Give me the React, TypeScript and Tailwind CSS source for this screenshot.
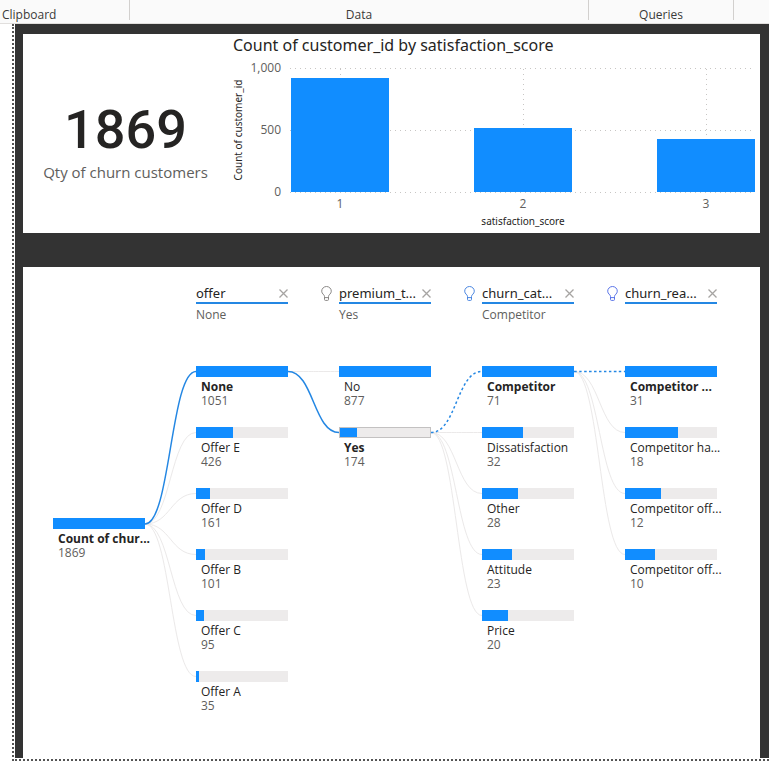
import React from "react";

type TreeNode = { name: string; value: number; bold?: boolean; framed?: boolean };
type Level = { title: string; selection: string; bulb?: string; nodes: TreeNode[] };

const LEVELS: Level[] = [
  {
    title: "offer",
    selection: "None",
    nodes: [
      { name: "None", value: 1051, bold: true },
      { name: "Offer E", value: 426 },
      { name: "Offer D", value: 161 },
      { name: "Offer B", value: 101 },
      { name: "Offer C", value: 95 },
      { name: "Offer A", value: 35 },
    ],
  },
  {
    title: "premium_t...",
    selection: "Yes",
    bulb: "#8a8886",
    nodes: [
      { name: "No", value: 877 },
      { name: "Yes", value: 174, bold: true, framed: true },
    ],
  },
  {
    title: "churn_cat...",
    selection: "Competitor",
    bulb: "#4a86e0",
    nodes: [
      { name: "Competitor", value: 71, bold: true },
      { name: "Dissatisfaction", value: 32 },
      { name: "Other", value: 28 },
      { name: "Attitude", value: 23 },
      { name: "Price", value: 20 },
    ],
  },
  {
    title: "churn_rea...",
    selection: "",
    bulb: "#5a74e8",
    nodes: [
      { name: "Competitor ...", value: 31, bold: true },
      { name: "Competitor ha...", value: 18 },
      { name: "Competitor off...", value: 12 },
      { name: "Competitor off...", value: 10 },
    ],
  },
];

const BARS = [
  { label: "1", x: 63, top: 44 },
  { label: "2", x: 246, top: 94 },
  { label: "3", x: 429, top: 105 },
];

const TICKS = [
  { label: "1,000", y: 34 },
  { label: "500", y: 96 },
  { label: "0", y: 158 },
];

// Node geometry shared by the connector curves
const COLUMN_PITCH = 143;
const COLUMN_WIDTH = 92;
const ROW_PITCH = 61;
const ROOT_Y = 158;

function link(column: number, fromY: number, toY: number) {
  const x0 = column * COLUMN_PITCH + COLUMN_WIDTH;
  const x1 = (column + 1) * COLUMN_PITCH;
  const mid = (x0 + x1) / 2;
  return `M${x0} ${fromY}C${mid} ${fromY} ${mid} ${toY} ${x1} ${toY}`;
}

const rowY = (row: number) => 5.5 + row * ROW_PITCH;

function Connectors() {
  return (
    <svg
      className="pointer-events-none absolute left-0 top-0 overflow-visible"
      width="664"
      height="360"
      fill="none"
      aria-hidden="true"
    >
      <g stroke="#ebe9e9">
        {[1, 2, 3, 4, 5].map((r) => (
          <path key={r} d={link(0, ROOT_Y, rowY(r))} />
        ))}
        <path d={link(1, rowY(0), rowY(0))} />
        {[1, 2, 3, 4].map((r) => (
          <path key={r} d={link(2, rowY(1), rowY(r))} />
        ))}
        {[1, 2, 3].map((r) => (
          <path key={r} d={link(3, rowY(0), rowY(r))} />
        ))}
      </g>
      <g stroke="#2487e3" strokeWidth="1.5">
        <path d={link(0, ROOT_Y, rowY(0))} />
        <path d={link(1, rowY(0), rowY(1))} />
        <path d={link(2, rowY(1), rowY(0))} strokeDasharray="2.5 2.5" />
        <path d={link(3, rowY(0), rowY(0))} strokeDasharray="2.5 2.5" />
      </g>
    </svg>
  );
}

function NodeBox({ node, max }: { node: TreeNode; max: number }) {
  return (
    <li className="h-[61px] whitespace-nowrap text-[12px] leading-[14px]">
      <div
        className={
          node.framed
            ? "h-[11px] bg-[#edebeb] outline outline-1 -outline-offset-1 outline-[#c3c1c1]"
            : "h-[11px] bg-[#edebeb]"
        }
      >
        <div className="h-full bg-[#118dff]" style={{ width: `${(node.value / max) * 100}%` }} />
      </div>
      <div className={node.bold ? "mt-[3px] pl-[5px] font-bold text-[#252423]" : "mt-[3px] pl-[5px] text-[#252423]"}>
        {node.name}
      </div>
      <div className="pl-[5px] text-[#605e5c]">{node.value}</div>
    </li>
  );
}

function Bulb({ color }: { color: string }) {
  return (
    <svg
      className="absolute -left-[18px] top-[2px]"
      width="11"
      height="15"
      viewBox="0 0 11 15"
      fill="none"
      stroke={color}
      aria-hidden="true"
    >
      <path d="M3.5 10.5C3.5 8.5 0.7 8 0.7 5.2A4.8 4.7 0 0 1 10.3 5.2C10.3 8 7.5 8.5 7.5 10.5V13.5Q7.5 14.4 6.6 14.4H4.4Q3.5 14.4 3.5 13.5ZM3.5 11.6H7.5" />
    </svg>
  );
}

function LevelHeader({ level }: { level: Level }) {
  return (
    <div className="relative h-[82px] w-[92px] whitespace-nowrap">
      {level.bulb && <Bulb color={level.bulb} />}
      <div className="flex h-5 items-center justify-between border-b-2 border-[#2487e3]">
        <h2 className="font-['Noto_Sans',sans-serif] text-[13px] leading-[18px] text-[#252423]">{level.title}</h2>
        <button type="button" aria-label={`Remove ${level.title}`} className="mt-px shrink-0">
          <svg width="9" height="9" viewBox="0 0 9 9" stroke="#a6a4a2" strokeWidth="1.3" aria-hidden="true">
            <path d="M0.5 0.5L8.5 8.5M8.5 0.5L0.5 8.5" />
          </svg>
        </button>
      </div>
      <p className="mt-1 text-[12px] leading-[14px] text-[#605e5c]">{level.selection}</p>
    </div>
  );
}

function ColumnChart() {
  return (
    <svg
      viewBox="0 0 532 199"
      className="min-w-0 flex-1 font-['Open_Sans','Noto_Sans',sans-serif]"
      role="img"
      aria-label="Count of customer_id by satisfaction_score"
    >
      <text x="5" y="17" fontSize="16" fill="#252423" className="font-['Noto_Sans',sans-serif]">
        Count of customer_id by satisfaction_score
      </text>
      <g stroke="#c8c6c4" strokeDasharray="1 4">
        {TICKS.map((t) => (
          <path key={t.label} d={`M62 ${t.y + 0.5}H525`} />
        ))}
        {BARS.map((b) => (
          <path key={b.label} d={`M${b.x + 49.5} 35V159`} />
        ))}
      </g>
      {BARS.map((b) => (
        <rect key={b.label} x={b.x} y={b.top} width="98" height={158 - b.top} fill="#118dff" />
      ))}
      <g fontSize="12" fill="#605e5c">
        {TICKS.map((t) => (
          <text key={t.label} x="53" y={t.y + 4} textAnchor="end">
            {t.label}
          </text>
        ))}
        {BARS.map((b) => (
          <text key={b.label} x={b.x + 49} y="174" textAnchor="middle">
            {b.label}
          </text>
        ))}
      </g>
      <g fontSize="10" fill="#252423" textAnchor="middle" className="font-['Noto_Sans',sans-serif]">
        <text x="295" y="191">
          satisfaction_score
        </text>
        <text transform="translate(14 96) rotate(-90)">Count of customer_id</text>
      </g>
    </svg>
  );
}

export default function App() {
  return (
    <div className="min-h-[765px] overflow-x-hidden bg-white font-['Open_Sans','Noto_Sans',sans-serif]">
      <header className="flex h-6 border-b border-[#e1dfdd] bg-[#fafafa] text-center text-[12px] leading-[30px] text-[#3b3a39]">
        <div className="mb-[3px] w-[130px] shrink-0 border-r border-[#d2d0ce] pl-[2px] text-left">Clipboard</div>
        <div className="mb-[3px] flex-1 border-r border-[#d2d0ce]">Data</div>
        <div className="mb-[3px] w-[145px] shrink-0 border-r border-[#d2d0ce]">Queries</div>
        <div className="w-[35px] shrink-0" />
      </header>

      <main className="ml-3 border-b-2 border-l-2 border-dotted border-[#555] pb-px pl-px">
        <div className="flex flex-col gap-[34px] bg-[#333] pl-2 pr-[9px] pt-[10px]">
          <section className="flex items-start bg-white">
            <div className="flex w-[205px] shrink-0 flex-col items-center self-center pt-4 text-center">
              <div className="font-['Roboto',sans-serif] text-[54px] font-medium leading-[60px] text-[#252423]">1869</div>
              <div className="text-[15px] leading-[24px] text-[#605e5c]">Qty of churn customers</div>
            </div>
            <ColumnChart />
          </section>

          <section className="h-[491px] bg-white pl-[30px] pt-[17px]">
            <div className="flex gap-[51px] pl-[143px]">
              {LEVELS.map((level) => (
                <LevelHeader key={level.title} level={level} />
              ))}
            </div>
            <div className="relative flex gap-[51px]">
              <Connectors />
              <ul className="w-[92px] shrink-0 pt-[152px]">
                <NodeBox node={{ name: "Count of chur...", value: 1869, bold: true }} max={1869} />
              </ul>
              {LEVELS.map((level) => (
                <ul key={level.title} className="w-[92px] shrink-0">
                  {level.nodes.map((node, i) => (
                    <NodeBox key={i} node={node} max={level.nodes[0].value} />
                  ))}
                </ul>
              ))}
            </div>
          </section>
        </div>
      </main>
    </div>
  );
}
